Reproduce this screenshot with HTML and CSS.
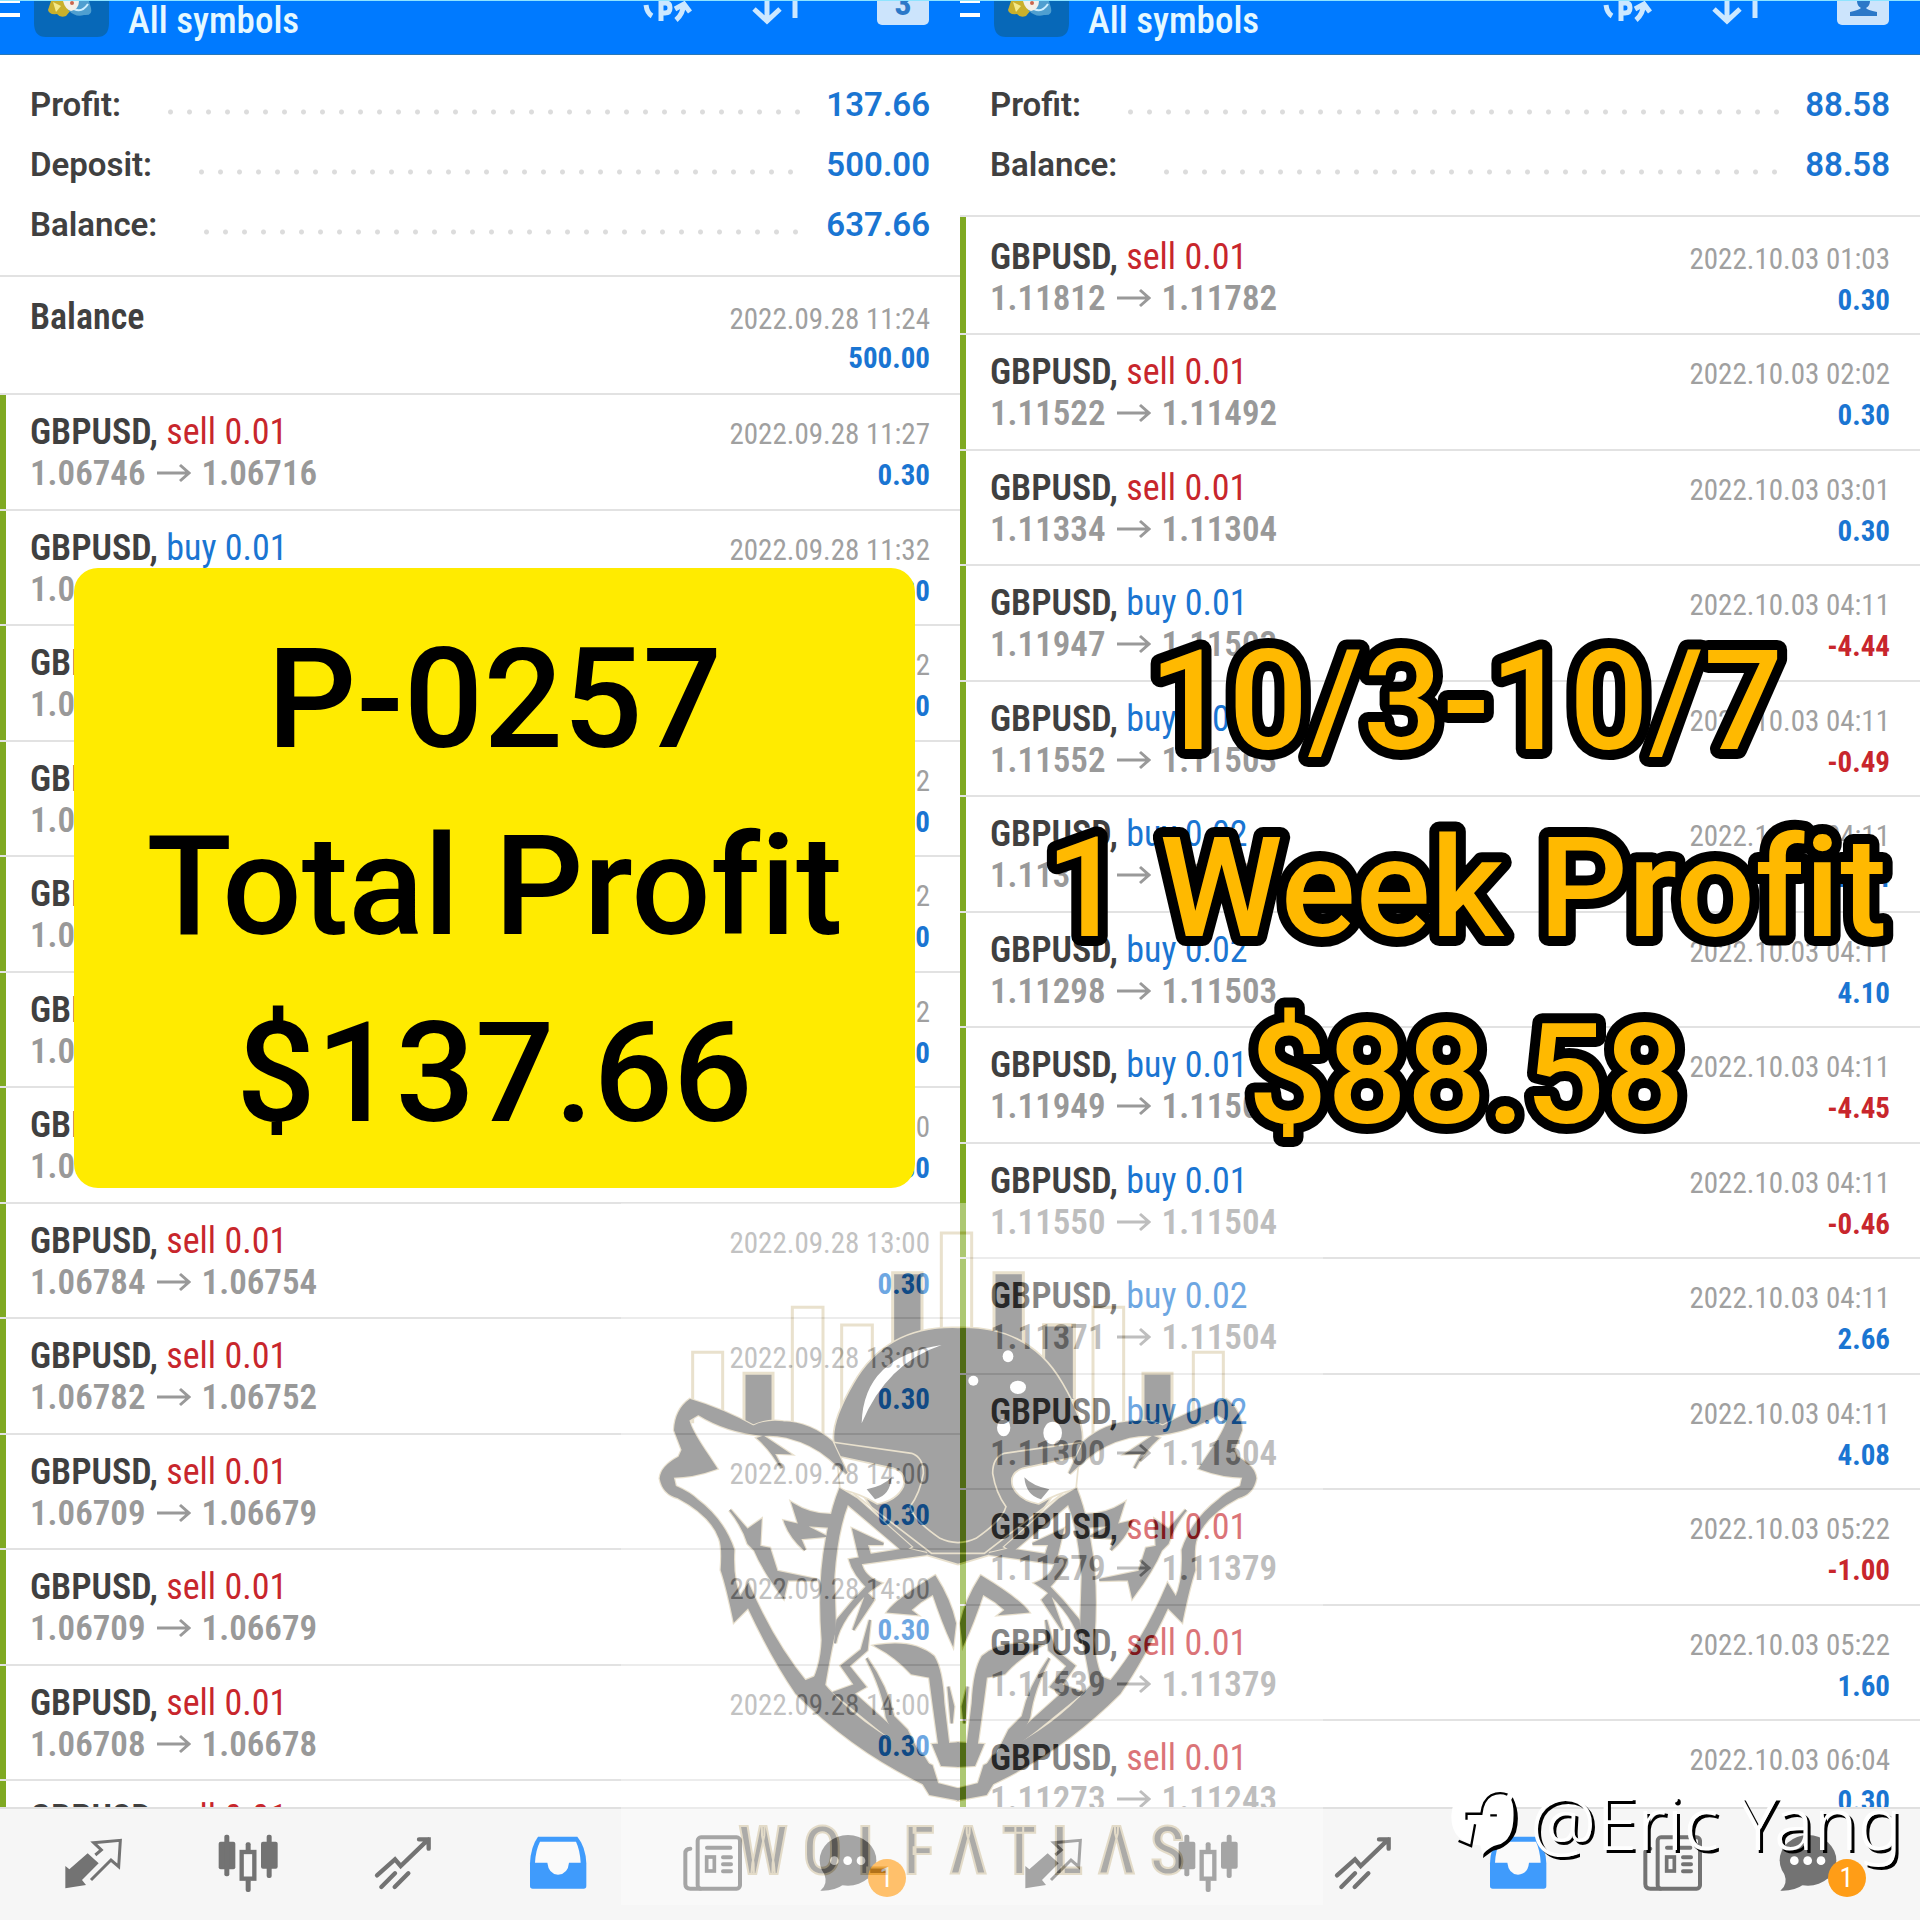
FILE: index.html
```html
<!DOCTYPE html>
<html lang="en">
<head>
  <meta charset="UTF-8" />
  <meta name="viewport" content="width=device-width, initial-scale=1.0" />
  <title>Weekly Profit</title>
  <link rel="stylesheet" href="styles.css">
</head>
<body>
  <!-- shared icons -->
  <svg class="sprite" aria-hidden="true">
    <symbol id="i-menu" viewBox="0 0 20 17">
      <path d="M0 0h20v2H0zM0 12h20v4H0z" fill="#fff" />
    </symbol>
    <symbol id="i-app" viewBox="0 0 75 36">
      <path d="M0 0h75v22q0 14-12 14H12Q0 36 0 22z" fill="#0768b8" />
      <path d="M17 0h14l6 9-5 6q-6 2-9-2-8 1-9-4z" fill="#c9b02c" />
      <path d="M19 1l8 4-5 6z" fill="#f4e98a" />
      <path d="M55 0h-13l-8 9q8 8 16 5 9 1 7-7z" fill="#4f9fd0" />
      <path d="M40 8q8 4 14-5" stroke="#cdeeff" stroke-width="2" fill="none" />
      <path d="M29 0h16q0 8-8 10-6-2-8-10z" fill="#f3f0e8" />
      <circle cx="38" cy="2" r="2" fill="#c8664e" />
    </symbol>
    <symbol id="i-currency" viewBox="0 0 52 26">
      <path d="M3 4q1 8 6 11M18 0v20M18 2h5q4 0 4 5t-5 5h-4" />
      <path d="M40 3q1 9-7 16M32 8l9-5 6 8" />
    </symbol>
    <symbol id="i-sort" viewBox="0 0 52 26">
      <path d="M20 0v20M7 8l13 12L33 8M48 0v17" />
    </symbol>
    <symbol id="i-trade" viewBox="188 96 180 180">
      <path d="M195 198l12 10 55-48 33 30-50 50 12 15-62 10z" fill="currentColor" />
      <path d="M285 165l18-15-23-22 80-7-5 79-23-20-60 60" fill="none" stroke="currentColor" stroke-width="9" />
    </symbol>
    <symbol id="i-candles" viewBox="652 96 180 180">
      <g fill="currentColor">
        <rect x="654" y="125" width="50" height="83" rx="6" />
        <rect x="671" y="104" width="15" height="125" rx="6" />
        <rect x="781" y="125" width="50" height="81" rx="6" />
        <rect x="798" y="104" width="15" height="130" rx="6" />
        <rect x="735" y="127" width="15" height="28" rx="6" />
        <rect x="735" y="238" width="15" height="38" rx="6" />
      </g>
      <rect x="723" y="156" width="38" height="80" fill="none" stroke="currentColor" stroke-width="13" />
    </symbol>
    <symbol id="i-chart" viewBox="1117 96 180 180">
      <path d="M1129 226l54-48 17 20 83-80M1255 118h29v28M1142 261l41-41M1182 261l41-41" fill="none" stroke="currentColor" stroke-width="13" stroke-linecap="round" />
    </symbol>
    <symbol id="i-inbox" viewBox="142 186 180 180">
      <path d="M172 200h118q25 30 27 80v68q0 8-8 8H156q-8 0-8-8v-68q2-50 24-80z" fill="#3f9bfc" />
      <path d="M178 215h108q12 25 14 63h-35q-3 34-33 36-28-2-32-36h-37q2-38 15-63z" fill="#fafafa" />
    </symbol>
    <symbol id="i-news" viewBox="612 186 180 180">
      <g fill="none" stroke="currentColor" stroke-width="12" stroke-linecap="round">
        <rect x="656" y="202" width="127" height="154" rx="10" />
        <path d="M634 236q-15 0-15 14v92q0 14 15 14h30M684 233h70M732 262h24M732 283h24M732 304h24" />
        <rect x="683" y="261" width="23" height="42" stroke-width="11" />
      </g>
    </symbol>
    <symbol id="i-chat" viewBox="1013 186 180 180">
      <ellipse cx="1103" cy="271" rx="85" ry="76" fill="currentColor" />
      <path d="M1032 312q12 32-12 50 42 2 72-20z" fill="currentColor" />
      <g fill="#fff"><circle cx="1062" cy="272" r="13" /><circle cx="1102" cy="272" r="13" /><circle cx="1142" cy="272" r="13" /></g>
    </symbol>
    <symbol id="i-arrow" viewBox="0 0 34 20">
      <path d="M0 10h32M23 2l9 8-9 8" fill="none" stroke="currentColor" stroke-width="3" />
    </symbol>
  </svg>

  <main class="board">
    <section class="phone">
      <header class="topbar">
        <button class="menu" aria-label="Menu"><svg><use href="#i-menu" /></svg></button>
        <svg class="app"><use href="#i-app" /></svg>
        <h1>All symbols</h1>
        <button class="tool" aria-label="Currency"><svg><use href="#i-currency" /></svg></button>
        <button class="tool" aria-label="Sort"><svg><use href="#i-sort" /></svg></button>
        <button class="tool period" aria-label="Period">3</button>
      </header>
      <dl class="summary">
        <div><dt>Profit:</dt><dd>137.66</dd></div>
        <div><dt>Deposit:</dt><dd>500.00</dd></div>
        <div><dt>Balance:</dt><dd>637.66</dd></div>
      </dl>
      <ul class="deals" id="dealsTotal"></ul>
      <nav class="tabs"></nav>
      <div class="caption card">P-0257<br>Total Profit<br>$137.66</div>
    </section>

    <section class="phone">
      <header class="topbar">
        <button class="menu" aria-label="Menu"><svg><use href="#i-menu" /></svg></button>
        <svg class="app"><use href="#i-app" /></svg>
        <h1>All symbols</h1>
        <button class="tool" aria-label="Currency"><svg><use href="#i-currency" /></svg></button>
        <button class="tool" aria-label="Sort"><svg><use href="#i-sort" /></svg></button>
        <button class="tool period" aria-label="Period">
          <svg viewBox="0 0 52 26"><path d="M20 0h13q0 5-4 7 1 2 11 4v4H13v-4q9-2 11-4-4-2-4-7z" fill="#2b78c8" stroke="none" /></svg>
        </button>
      </header>
      <dl class="summary">
        <div><dt>Profit:</dt><dd>88.58</dd></div>
        <div><dt>Balance:</dt><dd>88.58</dd></div>
      </dl>
      <ul class="deals" id="dealsWeek"></ul>
      <nav class="tabs"></nav>
      <svg class="caption outline">
        <text x="50%" y="141">10/3-10/7</text>
        <text x="50%" y="328">1 Week Profit</text>
        <text x="50%" y="515">$88.58</text>
      </svg>
    </section>

    <div class="watermark">
      <svg viewBox="-57 -21 2106 2106" aria-hidden="true">
        <defs>
          <g id="bars">
            <path d="M158 640V427h90v213M457 690V292h92v400M605 600V345h92v220" fill="#fff" />
            <path d="M312 660V490h87v170zM758 440V188h88v252z" fill="#000" />
          </g>
          <g id="helmet">
            <path d="M954 352Q740 345 640 520 570 640 582 700L600 760 700 900 800 1018 954 1064" fill="#000" />
            <path d="M590 738L760 775Q802 790 790 830 770 872 712 882 660 850 600 838z" fill="#fff" />
            <path d="M680 838q50-10 75-36-5 55-50 66z" fill="#000" stroke="none" />
            <path d="M575 696L815 730Q850 742 850 790 840 850 810 890 820 930 900 985 925 997 954 998M640 850L875 1030H954" fill="none" />
          </g>
          <g id="wolf">
            <path d="M150 570Q108 600 105 660L128 720 118 742Q65 770 62 805 70 850 115 862 215 915 240 985 250 1010 245 1080 262 1130 283 1232L325 1190Q400 1350 470 1450 640 1620 850 1720L870 1752 954 1768V1738L892 1722 875 1668Q690 1590 560 1450L500 1420Q400 1300 325 1125L300 1165Q275 1110 280 1020 250 930 170 870 150 850 105 830L98 800Q160 800 228 775L205 740Q150 660 145 630L175 612Q260 665 370 675 400 672 440 680 520 700 570 745L620 790 575 696Q510 640 430 637 380 630 340 650 250 600 150 570z" />
            <path d="M480 1420L530 1400Q660 1560 850 1640L875 1680 850 1700Q640 1600 480 1420z" />
            <path d="M355 685L370 680 445 730 400 728 425 775Q395 720 355 685z" />
            <path d="M270 900L322 960 362 932 358 1010 388 1016 410 1085 530 1110 442 1108 430 1160Q370 1080 345 1020L325 1000Q310 950 270 900z" />
            <path d="M458 882Q510 915 572 915L568 950 490 945 555 978 480 985 495 1020Q450 980 435 935L478 945z" />
            <path d="M600 838L650 868 810 1010 790 1022 622 880Q590 960 580 1100L585 1260Q570 1320 550 1440H505Q545 1380 548 1290 535 1120 560 990 575 900 600 838z" />
            <path d="M640 960L730 1002 680 1002 690 1035 800 1018 860 1032 662 1060Q670 1100 720 1120L690 1140Q640 1090 630 1050L660 1045z" />
            <path d="M700 1130Q600 1220 585 1300L592 1230Q640 1170 690 1120zM680 1150L640 1260 700 1170zM690 1230L680 1320 625 1368 675 1430 640 1450 740 1540 840 1650 720 1560 582 1448 645 1425 605 1368 665 1320z" />
            <path d="M745 1205Q770 1170 885 1100 930 1170 945 1240L938 1300Q910 1240 880 1150L840 1175 810 1200 825 1212z" />
            <path d="M710 1308Q820 1290 880 1340 905 1380 910 1480L925 1605 900 1620Q880 1480 870 1400L815 1390Q770 1340 710 1308z" />
            <path d="M680 1345Q740 1430 760 1520L800 1560 840 1640Q760 1580 740 1520 730 1440 680 1345zM925 1430L940 1490 935 1540z" />
            <path d="M880 1605L954 1600V1668L905 1665z" />
          </g>
        </defs>
        <g stroke="#c4ad78" stroke-width="9">
          <use href="#bars" />
          <use href="#bars" transform="matrix(-1 0 0 1 1908 0)" />
          <path d="M1211 600V345h92v220" fill="#000" />
          <path d="M904 370V69h91v300" fill="#fff" />
        </g>
        <g stroke="#c4ad78" stroke-width="5">
          <use href="#helmet" />
          <use href="#helmet" transform="matrix(-1 0 0 1 1908 0)" />
        </g>
        <g stroke="#c4ad78" stroke-width="13">
          <use href="#wolf" />
          <use href="#wolf" transform="matrix(-1 0 0 1 1908 0)" />
        </g>
        <g stroke="#000" stroke-width="6">
          <use href="#wolf" />
          <use href="#wolf" transform="matrix(-1 0 0 1 1908 0)" />
        </g>
        <path d="M665 640Q670 440 905 405 740 460 665 640z" fill="#fff" />
        <g fill="#fff">
          <ellipse cx="1104" cy="439" rx="16" ry="18" /><circle cx="1000" cy="512" r="15" /><ellipse cx="1134" cy="532" rx="24" ry="20" />
          <ellipse cx="1091" cy="653" rx="20" ry="26" /><ellipse cx="1238" cy="669" rx="28" ry="34" />
        </g>
      </svg>
      <div class="brand"><span>W</span><span>O</span><span>L</span><span>F</span><span>Λ</span><span>T</span><span>L</span><span>Λ</span><span>S</span></div>
    </div>

    <div class="author">
      <svg viewBox="60 66 206 218" aria-hidden="true">
        <path d="M250 100Q275 150 260 205 240 252 190 262L160 284 165 240z" fill="#000" />
        <path d="M160 68Q245 60 252 135 258 230 205 244 180 250 158 274L152 246Q62 240 64 155 68 75 160 68z" fill="#fff" />
        <path d="M234 92Q210 82 185 94 160 108 155 150H110V168M182 155h20M136 182L124 248 86 232" fill="none" stroke="#000" stroke-width="7" />
      </svg>
      <span>@Eric Yang</span>
    </div>
  </main>

  <script>
    const total = [
      ['Balance', '', '', '', '2022.09.28 11:24', '500.00'],
      ['GBPUSD', 'sell 0.01', '1.06746', '1.06716', '2022.09.28 11:27', '0.30'],
      ['GBPUSD', 'buy 0.01', '1.06748', '1.06778', '2022.09.28 11:32', '0.30'],
      ['GBPUSD', 'buy 0.01', '1.06750', '1.06780', '2022.09.28 11:32', '0.30'],
      ['GBPUSD', 'buy 0.01', '1.06751', '1.06781', '2022.09.28 11:32', '0.30'],
      ['GBPUSD', 'buy 0.01', '1.06752', '1.06782', '2022.09.28 11:32', '0.30'],
      ['GBPUSD', 'buy 0.01', '1.06753', '1.06783', '2022.09.28 11:32', '0.30'],
      ['GBPUSD', 'sell 0.01', '1.06785', '1.06755', '2022.09.28 13:00', '0.30'],
      ['GBPUSD', 'sell 0.01', '1.06784', '1.06754', '2022.09.28 13:00', '0.30'],
      ['GBPUSD', 'sell 0.01', '1.06782', '1.06752', '2022.09.28 13:00', '0.30'],
      ['GBPUSD', 'sell 0.01', '1.06709', '1.06679', '2022.09.28 14:00', '0.30'],
      ['GBPUSD', 'sell 0.01', '1.06709', '1.06679', '2022.09.28 14:00', '0.30'],
      ['GBPUSD', 'sell 0.01', '1.06708', '1.06678', '2022.09.28 14:00', '0.30'],
      ['GBPUSD', 'sell 0.01', '', '', '', '']
    ];

    const week = [
      ['GBPUSD', 'sell 0.01', '1.11812', '1.11782', '2022.10.03 01:03', '0.30'],
      ['GBPUSD', 'sell 0.01', '1.11522', '1.11492', '2022.10.03 02:02', '0.30'],
      ['GBPUSD', 'sell 0.01', '1.11334', '1.11304', '2022.10.03 03:01', '0.30'],
      ['GBPUSD', 'buy 0.01', '1.11947', '1.11503', '2022.10.03 04:11', '-4.44'],
      ['GBPUSD', 'buy 0.01', '1.11552', '1.11503', '2022.10.03 04:11', '-0.49'],
      ['GBPUSD', 'buy 0.02', '1.11371', '1.11503', '2022.10.03 04:11', '2.64'],
      ['GBPUSD', 'buy 0.02', '1.11298', '1.11503', '2022.10.03 04:11', '4.10'],
      ['GBPUSD', 'buy 0.01', '1.11949', '1.11504', '2022.10.03 04:11', '-4.45'],
      ['GBPUSD', 'buy 0.01', '1.11550', '1.11504', '2022.10.03 04:11', '-0.46'],
      ['GBPUSD', 'buy 0.02', '1.11371', '1.11504', '2022.10.03 04:11', '2.66'],
      ['GBPUSD', 'buy 0.02', '1.11300', '1.11504', '2022.10.03 04:11', '4.08'],
      ['GBPUSD', 'sell 0.01', '1.11279', '1.11379', '2022.10.03 05:22', '-1.00'],
      ['GBPUSD', 'sell 0.01', '1.11539', '1.11379', '2022.10.03 05:22', '1.60'],
      ['GBPUSD', 'sell 0.01', '1.11273', '1.11243', '2022.10.03 06:04', '0.30']
    ];

    const tabs = ['trade', 'candles', 'chart', 'inbox', 'news', 'chat'];

    function renderDeals(id, deals) {
      document.getElementById(id).innerHTML = deals.map(([symbol, order, from, to, time, profit]) => `
        <li class="${order ? 'deal' : 'deal deposit'}">
          <div class="line">
            <span><b>${symbol}${order ? ',' : ''}</b> <span class="${order.split(' ')[0]}">${order}</span></span>
            <time>${time}</time>
          </div>
          <div class="line">
            <span class="price">${from ? `${from}<svg><use href="#i-arrow" /></svg>${to}` : ''}</span>
            <strong class="${profit.startsWith('-') ? 'loss' : 'gain'}">${profit}</strong>
          </div>
        </li>
      `).join('');
    }

    function renderTabs() {
      document.querySelectorAll('.tabs').forEach(nav => {
        nav.innerHTML = tabs.map(name => `
          <button class="tab ${name}" aria-label="${name}">
            <svg><use href="#i-${name}" /></svg>
            ${name === 'chat' ? '<span class="badge">1</span>' : ''}
          </button>
        `).join('');
      });
    }

    renderDeals('dealsTotal', total);
    renderDeals('dealsWeek', week);
    renderTabs();
  </script>
</body>
</html>
```
FILE: styles.css
```css
* {
  box-sizing: border-box;
}
body {
  margin: 0;
  font-family: "Roboto Condensed", Roboto, sans-serif;
  background: #fff;
  color: #404040;
}
button {
  border: 0;
  padding: 0;
  background: none;
  font: inherit;
  cursor: pointer;
}
.sprite {
  position: absolute;
  width: 0;
  height: 0;
}
.board {
  position: relative;
  display: grid;
  grid-template-columns: 1fr 1fr;
  height: 100vh;
  overflow: hidden;
}
.phone {
  position: relative;
  display: flex;
  flex-direction: column;
  min-width: 0;
  min-height: 0;
}

/* header */
.topbar {
  display: flex;
  align-items: flex-start;
  height: 55px;
  flex: none;
  padding-right: 31px;
  background: #007aff;
  border-top: 1px solid #8fe4ff;
  border-bottom: 1px solid #2a78b8;
}
.menu svg {
  display: block;
  width: 20px;
  height: 17px;
}
.app {
  width: 75px;
  height: 36px;
  margin-left: 14px;
}
.topbar h1 {
  margin: 0 auto 0 19px;
  font-size: 37px;
  font-weight: 500;
  line-height: 40px;
  color: #e6f8ff;
}
.tool {
  display: flex;
  justify-content: center;
  align-items: flex-start;
  width: 52px;
  height: 24px;
  margin-left: 52px;
  overflow: hidden;
}
.tool svg {
  width: 52px;
  height: 26px;
  fill: none;
  stroke: #cce8ff;
  stroke-width: 5;
}
.tool.period {
  margin-left: 78px;
  border-radius: 0 0 5px 5px;
  background: #cce4fc;
  color: #2b78c8;
  font-size: 34px;
  font-weight: 700;
  line-height: 4px;
}

/* account summary */
.summary {
  margin: 0;
  padding: 20px 30px;
  border-bottom: 2px solid #e2e2e2;
  font-family: Roboto, sans-serif;
  font-size: 33px;
  font-weight: 600;
  line-height: 60px;
}
.summary div {
  display: flex;
}
.summary dt {
  flex: 1;
  display: flex;
}
.summary dt::after {
  content: "";
  flex: 1;
  margin: 34px 24px 20px 40px;
  background: radial-gradient(circle, #dcdcdc 2px, transparent 3px) 0 0 / 19px 6px repeat-x;
}
.summary dd {
  margin: 0;
  color: #1a75d2;
}

/* deals */
.deals {
  flex: 1;
  min-height: 0;
  margin: 0;
  padding: 0;
  list-style: none;
  overflow: hidden;
}
.deal {
  height: 115px;
  padding: 17px 30px 0;
  border-bottom: 2px solid #e2e2e2;
  box-shadow: inset 6px 0 #7fa922;
}
.deal:nth-child(even) {
  height: 116px;
}
.deal:first-child {
  height: 118px;
  padding-top: 20px;
}
.deposit {
  box-shadow: none;
}
.line {
  display: flex;
  justify-content: space-between;
  align-items: baseline;
  height: 41px;
  font-size: 36px;
  line-height: 41px;
}
.line b {
  font-weight: 600;
}
.buy {
  color: #1a75d2;
}
.sell {
  color: #c8262c;
}
.price {
  color: #999;
  font-size: 35px;
  font-weight: 600;
}
.price svg {
  width: 34px;
  height: 20px;
  margin: 0 11px 2px;
}
.line time {
  font-size: 29px;
  color: #a0a0a0;
}
.line strong {
  font-size: 29px;
}
.gain {
  color: #1a75d2;
}
.loss {
  color: #c8262c;
}

/* bottom tabs */
.tabs {
  flex: none;
  display: grid;
  grid-template-columns: repeat(6, 1fr);
  height: 113px;
  padding: 23px 15px 0;
  border-top: 2px solid #e0e0e0;
  background: #f6f6f6;
}
.tab {
  position: relative;
  height: 60px;
  color: #737373;
}
.tab svg {
  width: 60px;
  height: 60px;
}
.tab.chat {
  padding-right: 39px;
}
.badge {
  position: absolute;
  left: 50%;
  top: 27px;
  width: 38px;
  height: 38px;
  border-radius: 50%;
  background: #ff9d17;
  color: #fff;
  font-size: 28px;
  line-height: 38px;
}

/* captions over the lists */
.caption {
  position: absolute;
  font-family: Roboto, sans-serif;
  font-size: 140px;
  font-weight: 500;
  font-variant-ligatures: none;
  line-height: 187px;
  text-align: center;
  white-space: nowrap;
}
.card {
  top: 568px;
  left: 74px;
  right: 45px;
  padding: 38px 0 21px;
  border-radius: 24px;
  background: #ffeb00;
  color: #000;
}
.outline {
  top: 608px;
  left: 52px;
  width: calc(100% - 52px);
  height: 561px;
  overflow: visible;
  fill: #ffb900;
  stroke: #000;
  stroke-width: 20px;
  stroke-linejoin: round;
  paint-order: stroke;
  text-anchor: middle;
}

/* logo laid over both lists */
.watermark {
  position: absolute;
  left: 621px;
  bottom: 15px;
  width: 702px;
  height: 702px;
  background: #fff;
  opacity: 0.36;
}
.watermark svg {
  display: block;
}
.brand {
  position: absolute;
  left: 117px;
  right: 138px;
  bottom: 17px;
  display: flex;
  justify-content: space-between;
  font-size: 66px;
  font-weight: 500;
  line-height: 72px;
  color: #2c2820;
  -webkit-text-stroke: 2px #c4ad78;
}

.author {
  position: absolute;
  right: 18px;
  bottom: 58px;
  display: flex;
  align-items: center;
  gap: 12px;
  color: #fff;
  font-family: "Noto Sans", sans-serif;
  font-size: 74px;
  font-weight: 300;
  line-height: 80px;
  text-shadow: 3px 3px 0 #000;
}
.author svg {
  width: 68px;
  height: 72px;
}
```
